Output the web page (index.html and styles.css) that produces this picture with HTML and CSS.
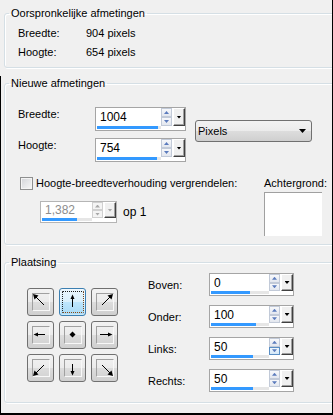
FILE: index.html
```html
<!DOCTYPE html>
<html lang="nl">
<head>
    <meta charset="UTF-8">
    <meta name="viewport" content="width=device-width, initial-scale=1.0">
    <title>Afmetingen canvas</title>
    <link rel="stylesheet" href="styles.css">
</head>
<body>
    <div class="window">
        <fieldset class="group group-orig">
            <legend>Oorspronkelijke afmetingen</legend>
            <div class="info-row"><span class="info-label">Breedte:</span><span>904 pixels</span></div>
            <div class="info-row"><span class="info-label">Hoogte:</span><span>654 pixels</span></div>
        </fieldset>

        <div class="lower">
            <fieldset class="group group-new">
                <legend>Nieuwe afmetingen</legend>
                <div class="size-row">
                    <div class="size-fields">
                        <span class="field-label">Breedte:</span>
                        <div class="spin spin-wide">
                            <div class="spin-field">
                                <span class="spin-value">1004</span>
                                <div class="spin-track"><div class="spin-bar" style="width: 61px"></div></div>
                            </div>
                            <div class="spin-arrows"><span class="spin-up"></span><span class="spin-down"></span></div>
                            <span class="spin-drop"></span>
                        </div>

                        <span class="field-label">Hoogte:</span>
                        <div class="spin spin-wide">
                            <div class="spin-field">
                                <span class="spin-value">754</span>
                                <div class="spin-track"><div class="spin-bar" style="width: 60px"></div></div>
                            </div>
                            <div class="spin-arrows"><span class="spin-up"></span><span class="spin-down"></span></div>
                            <span class="spin-drop"></span>
                        </div>
                    </div>
                    <div class="select">
                        <span>Pixels</span>
                        <span class="select-arrow"></span>
                    </div>
                </div>

                <div class="ratio-row">
                    <div class="ratio-left">
                        <div class="check"><span class="checkbox"></span>Hoogte-breedteverhouding vergrendelen:</div>
                        <div class="ratio">
                            <div class="spin spin-ratio disabled">
                                <div class="spin-field">
                                    <span class="spin-value">1,382</span>
                                    <div class="spin-track"><div class="spin-bar" style="width: 35px"></div></div>
                                </div>
                                <div class="spin-arrows"><span class="spin-up"></span><span class="spin-down"></span></div>
                                <span class="spin-drop"></span>
                            </div>
                            <span class="ratio-text">op 1</span>
                        </div>
                    </div>
                    <div class="background">
                        <span>Achtergrond:</span>
                        <div class="swatch"></div>
                    </div>
                </div>
            </fieldset>

            <fieldset class="group group-place">
                <legend>Plaatsing</legend>
                <div class="place-row">
                    <div class="pos-grid">
                        <div class="pos-btn"><div class="pos-inner">
                            <svg width="16" height="16" viewBox="0 0 16 16"><line x1="3" y1="3" x2="11" y2="11"/><polygon points="0,0 5.5,1.5 1.5,5.5"/></svg>
                        </div></div>
                        <div class="pos-btn active"><div class="pos-focus"><div class="pos-inner">
                            <svg width="16" height="16" viewBox="0 0 16 16"><line x1="7.5" y1="3" x2="7.5" y2="13"/><polygon points="7.5,0.5 5.5,5 9.5,5"/></svg>
                        </div></div></div>
                        <div class="pos-btn"><div class="pos-inner">
                            <svg width="16" height="16" viewBox="0 0 16 16"><line x1="13" y1="3" x2="5" y2="11"/><polygon points="16,0 14.5,5.5 10.5,1.5"/></svg>
                        </div></div>

                        <div class="pos-btn"><div class="pos-inner">
                            <svg width="16" height="16" viewBox="0 0 16 16"><line x1="3" y1="7.5" x2="12" y2="7.5"/><polygon points="0.5,7.5 5,5.5 5,9.5"/></svg>
                        </div></div>
                        <div class="pos-btn"><div class="pos-inner">
                            <svg width="16" height="16" viewBox="0 0 16 16"><polygon points="7.5,4.5 10.5,7.5 7.5,10.5 4.5,7.5"/></svg>
                        </div></div>
                        <div class="pos-btn"><div class="pos-inner">
                            <svg width="16" height="16" viewBox="0 0 16 16"><line x1="3" y1="7.5" x2="13" y2="7.5"/><polygon points="15.5,7.5 11,5.5 11,9.5"/></svg>
                        </div></div>

                        <div class="pos-btn"><div class="pos-inner">
                            <svg width="16" height="16" viewBox="0 0 16 16"><line x1="3" y1="13" x2="11" y2="5"/><polygon points="0,16 1.5,10.5 5.5,14.5"/></svg>
                        </div></div>
                        <div class="pos-btn"><div class="pos-inner">
                            <svg width="16" height="16" viewBox="0 0 16 16"><line x1="7.5" y1="4" x2="7.5" y2="13"/><polygon points="7.5,15.5 5.5,11 9.5,11"/></svg>
                        </div></div>
                        <div class="pos-btn"><div class="pos-inner">
                            <svg width="16" height="16" viewBox="0 0 16 16"><line x1="13" y1="13" x2="5" y2="5"/><polygon points="16,16 10.5,14.5 14.5,10.5"/></svg>
                        </div></div>
                    </div>

                    <div class="margins">
                        <span class="margin-label">Boven:</span>
                        <div class="spin spin-sm">
                            <div class="spin-field">
                                <span class="spin-value">0</span>
                                <div class="spin-track"><div class="spin-bar" style="width: 39px"></div></div>
                            </div>
                            <div class="spin-arrows"><span class="spin-up"></span><span class="spin-down"></span></div>
                            <span class="spin-drop"></span>
                        </div>

                        <span class="margin-label">Onder:</span>
                        <div class="spin spin-sm">
                            <div class="spin-field">
                                <span class="spin-value">100</span>
                                <div class="spin-track"><div class="spin-bar" style="width: 45px"></div></div>
                            </div>
                            <div class="spin-arrows"><span class="spin-up"></span><span class="spin-down"></span></div>
                            <span class="spin-drop"></span>
                        </div>

                        <span class="margin-label">Links:</span>
                        <div class="spin spin-sm">
                            <div class="spin-field">
                                <span class="spin-value">50</span>
                                <div class="spin-track"><div class="spin-bar" style="width: 42px"></div></div>
                            </div>
                            <div class="spin-arrows"><span class="spin-up"></span><span class="spin-down hover"></span></div>
                            <span class="spin-drop"></span>
                        </div>

                        <span class="margin-label">Rechts:</span>
                        <div class="spin spin-sm">
                            <div class="spin-field">
                                <span class="spin-value">50</span>
                                <div class="spin-track"><div class="spin-bar" style="width: 42px"></div></div>
                            </div>
                            <div class="spin-arrows"><span class="spin-up"></span><span class="spin-down"></span></div>
                            <span class="spin-drop"></span>
                        </div>
                    </div>
                </div>
            </fieldset>
        </div>
    </div>
</body>
</html>
```

FILE: styles.css
```css
* {
    box-sizing: border-box;
}

body {
    margin: 0;
    font-family: "Liberation Sans", Arial, sans-serif;
    font-size: 11px;
    color: #000;
    background-color: #f0f0f0;
}

.window {
    width: 333px;
    height: 415px;
    padding-top: 6px;
    border-right: 1px solid #000;
    border-bottom: 2px solid #000;
    background-color: #f0f0f0;
    overflow: hidden;
}

.lower {
    border-left: 1px solid #000;
    padding-left: 3px;
    margin-top: 8px;
    height: 400px;
}

/* group boxes */
.group {
    margin: 0 -8px 0 4px;
    padding: 4px 0 5px 4px;
    min-width: 0;
    border: 1px solid #d5dfe5;
    border-radius: 3px;
    box-shadow: inset 1px 1px 0 #fff, 1px 1px 0 #fff;
}

.lower .group {
    margin-left: 0;
}

.group legend {
    padding: 0 2px;
    line-height: 14px;
}

.group-new {
    padding-top: 17px;
    padding-bottom: 8px;
}

.group-place {
    margin-top: 10px !important;
    padding-top: 4px;
    padding-bottom: 10px;
}

/* original size */
.info-row {
    display: flex;
    height: 19px;
    line-height: 19px;
    padding-left: 9px;
}

.info-label {
    width: 68px;
}

/* new size */
.size-row {
    display: flex;
    align-items: flex-start;
}

.size-fields {
    display: grid;
    grid-template-columns: 77px 91px;
    row-gap: 7px;
    padding-left: 9px;
}

.field-label {
    line-height: 14px;
}

.select {
    display: flex;
    align-items: center;
    justify-content: space-between;
    width: 117px;
    height: 22px;
    margin: 13px 0 0 9px;
    padding: 0 5px 0 2px;
    border: 1px solid #707070;
    border-radius: 3px;
    background: linear-gradient(#f2f2f2, #ebebeb 50%, #dddddd 50%, #cfcfcf);
}

.select-arrow {
    width: 7px;
    height: 4px;
    background-color: #000;
    clip-path: polygon(0 0, 100% 0, 50% 100%);
}

.ratio-row {
    display: flex;
    margin-top: 14px;
}

.ratio-left {
    width: 255px;
}

.check {
    display: flex;
    align-items: center;
    height: 14px;
    line-height: 14px;
    padding-left: 11px;
}

.checkbox {
    width: 13px;
    height: 13px;
    margin-right: 3px;
    border: 1px solid #8e8f8f;
    background: linear-gradient(135deg, #d2d4d8, #f7f7f7);
    box-shadow: inset 0 0 0 1px #f4f4f4;
}

.ratio {
    display: flex;
    align-items: center;
    margin: 11px 0 0 31px;
}

.ratio-text {
    margin-left: 6px;
    font-size: 12px;
}

.background {
    display: flex;
    flex-direction: column;
}

.background span {
    line-height: 14px;
}

.swatch {
    width: 58px;
    height: 44px;
    margin-top: 2px;
    background-color: #fff;
    border-top: 1px solid #a0a0a0;
    border-left: 1px solid #a0a0a0;
}

/* spin controls */
.spin {
    display: flex;
    align-items: flex-start;
    height: 24px;
    border: 1px solid #a5a5a5;
    background-color: #fff;
}

.spin-wide {
    width: 91px;
}

.spin-sm {
    width: 85px;
    height: 23px;
}

.spin-ratio {
    width: 77px;
    height: 22px;
}

.spin-field {
    flex: 1;
    display: flex;
    flex-direction: column;
    align-self: stretch;
}

.spin-value {
    flex: 1;
    display: flex;
    align-items: center;
    padding-left: 4px;
    font-size: 12px;
}

.spin-track {
    height: 3px;
    margin: 0 0 1px 1px;
    background-color: #e6e6e6;
}

.spin-bar {
    height: 3px;
    background-color: #3399ff;
}

.spin-arrows {
    display: flex;
    flex-direction: column;
    width: 11px;
    height: 18px;
    margin-right: 1px;
}

.spin-up,
.spin-down {
    flex: 1;
    display: flex;
    align-items: center;
    justify-content: center;
    border: 1px solid #c2cad8;
    background: linear-gradient(#f7f8fb, #e3e7ef);
}

.spin-up::after,
.spin-down::after {
    content: "";
    width: 5px;
    height: 3px;
    background-color: #5b7bbd;
}

.spin-up::after {
    clip-path: polygon(50% 0, 100% 100%, 0 100%);
}

.spin-down::after {
    clip-path: polygon(0 0, 100% 0, 50% 100%);
}

.spin-down.hover {
    border-color: #5a8ec4;
    background: linear-gradient(#eef6fd, #d4e8f8);
}

.spin-drop {
    display: flex;
    align-items: center;
    justify-content: center;
    width: 12px;
    height: 18px;
    border-top: 1px solid #fff;
    border-left: 1px solid #fff;
    border-right: 1px solid #404040;
    border-bottom: 1px solid #404040;
    background-color: #f0f0f0;
    box-shadow: inset -1px -1px 0 #a0a0a0;
}

.spin-drop::after {
    content: "";
    width: 5px;
    height: 3px;
    background-color: #000;
    clip-path: polygon(0 0, 100% 0, 50% 100%);
}

.spin-sm .spin-arrows,
.spin-sm .spin-drop {
    height: 17px;
}

.spin-ratio .spin-arrows,
.spin-ratio .spin-drop {
    height: 16px;
}

.spin.disabled {
    border-color: #b5b5b5;
}

.spin.disabled .spin-value {
    color: #8d8d8d;
}

.spin.disabled .spin-up,
.spin.disabled .spin-down {
    border-color: #d0d0d0;
    background: #f4f4f4;
}

.spin.disabled .spin-up::after,
.spin.disabled .spin-down::after,
.spin.disabled .spin-drop::after {
    background-color: #a8a8a8;
}

/* placement */
.place-row {
    display: flex;
    align-items: flex-start;
}

.pos-grid {
    display: grid;
    grid-template-columns: repeat(3, 27px);
    grid-template-rows: repeat(3, 28px);
    gap: 5px;
    margin: 15px 0 0 18px;
}

.pos-btn {
    display: flex;
    align-items: center;
    justify-content: center;
    border: 1px solid #707070;
    border-radius: 3px;
    background: linear-gradient(#f2f2f2, #ebebeb 50%, #dddddd 50%, #cfcfcf);
}

.pos-btn.active {
    border-color: #3c7fb1;
    background: linear-gradient(#eaf6fd, #d9f0fc 50%, #bee6fd 50%, #a7d9f5);
    box-shadow: inset 0 0 0 1px rgba(255, 255, 255, 0.4);
}

.pos-focus {
    display: flex;
    align-items: center;
    justify-content: center;
    width: 22px;
    height: 22px;
    border: 1px dotted;
    border-color: #1c1c1c #7a4318 #8a4a12 #262626;
}

.pos-inner {
    width: 18px;
    height: 18px;
    border: 1px solid;
    border-color: #a0a0a0 #f8f8f8 #f8f8f8 #a0a0a0;
}

.active .pos-inner {
    border-color: transparent;
}

.pos-inner svg {
    display: block;
    stroke: #000;
    stroke-width: 1;
    fill: #000;
}

.pos-inner line {
    shape-rendering: crispEdges;
}

.pos-inner polygon {
    stroke: none;
}

.margins {
    display: grid;
    grid-template-columns: 61px 85px;
    row-gap: 9px;
    align-items: center;
    margin-left: 30px;
}

.margin-label {
    line-height: 14px;
}
```
